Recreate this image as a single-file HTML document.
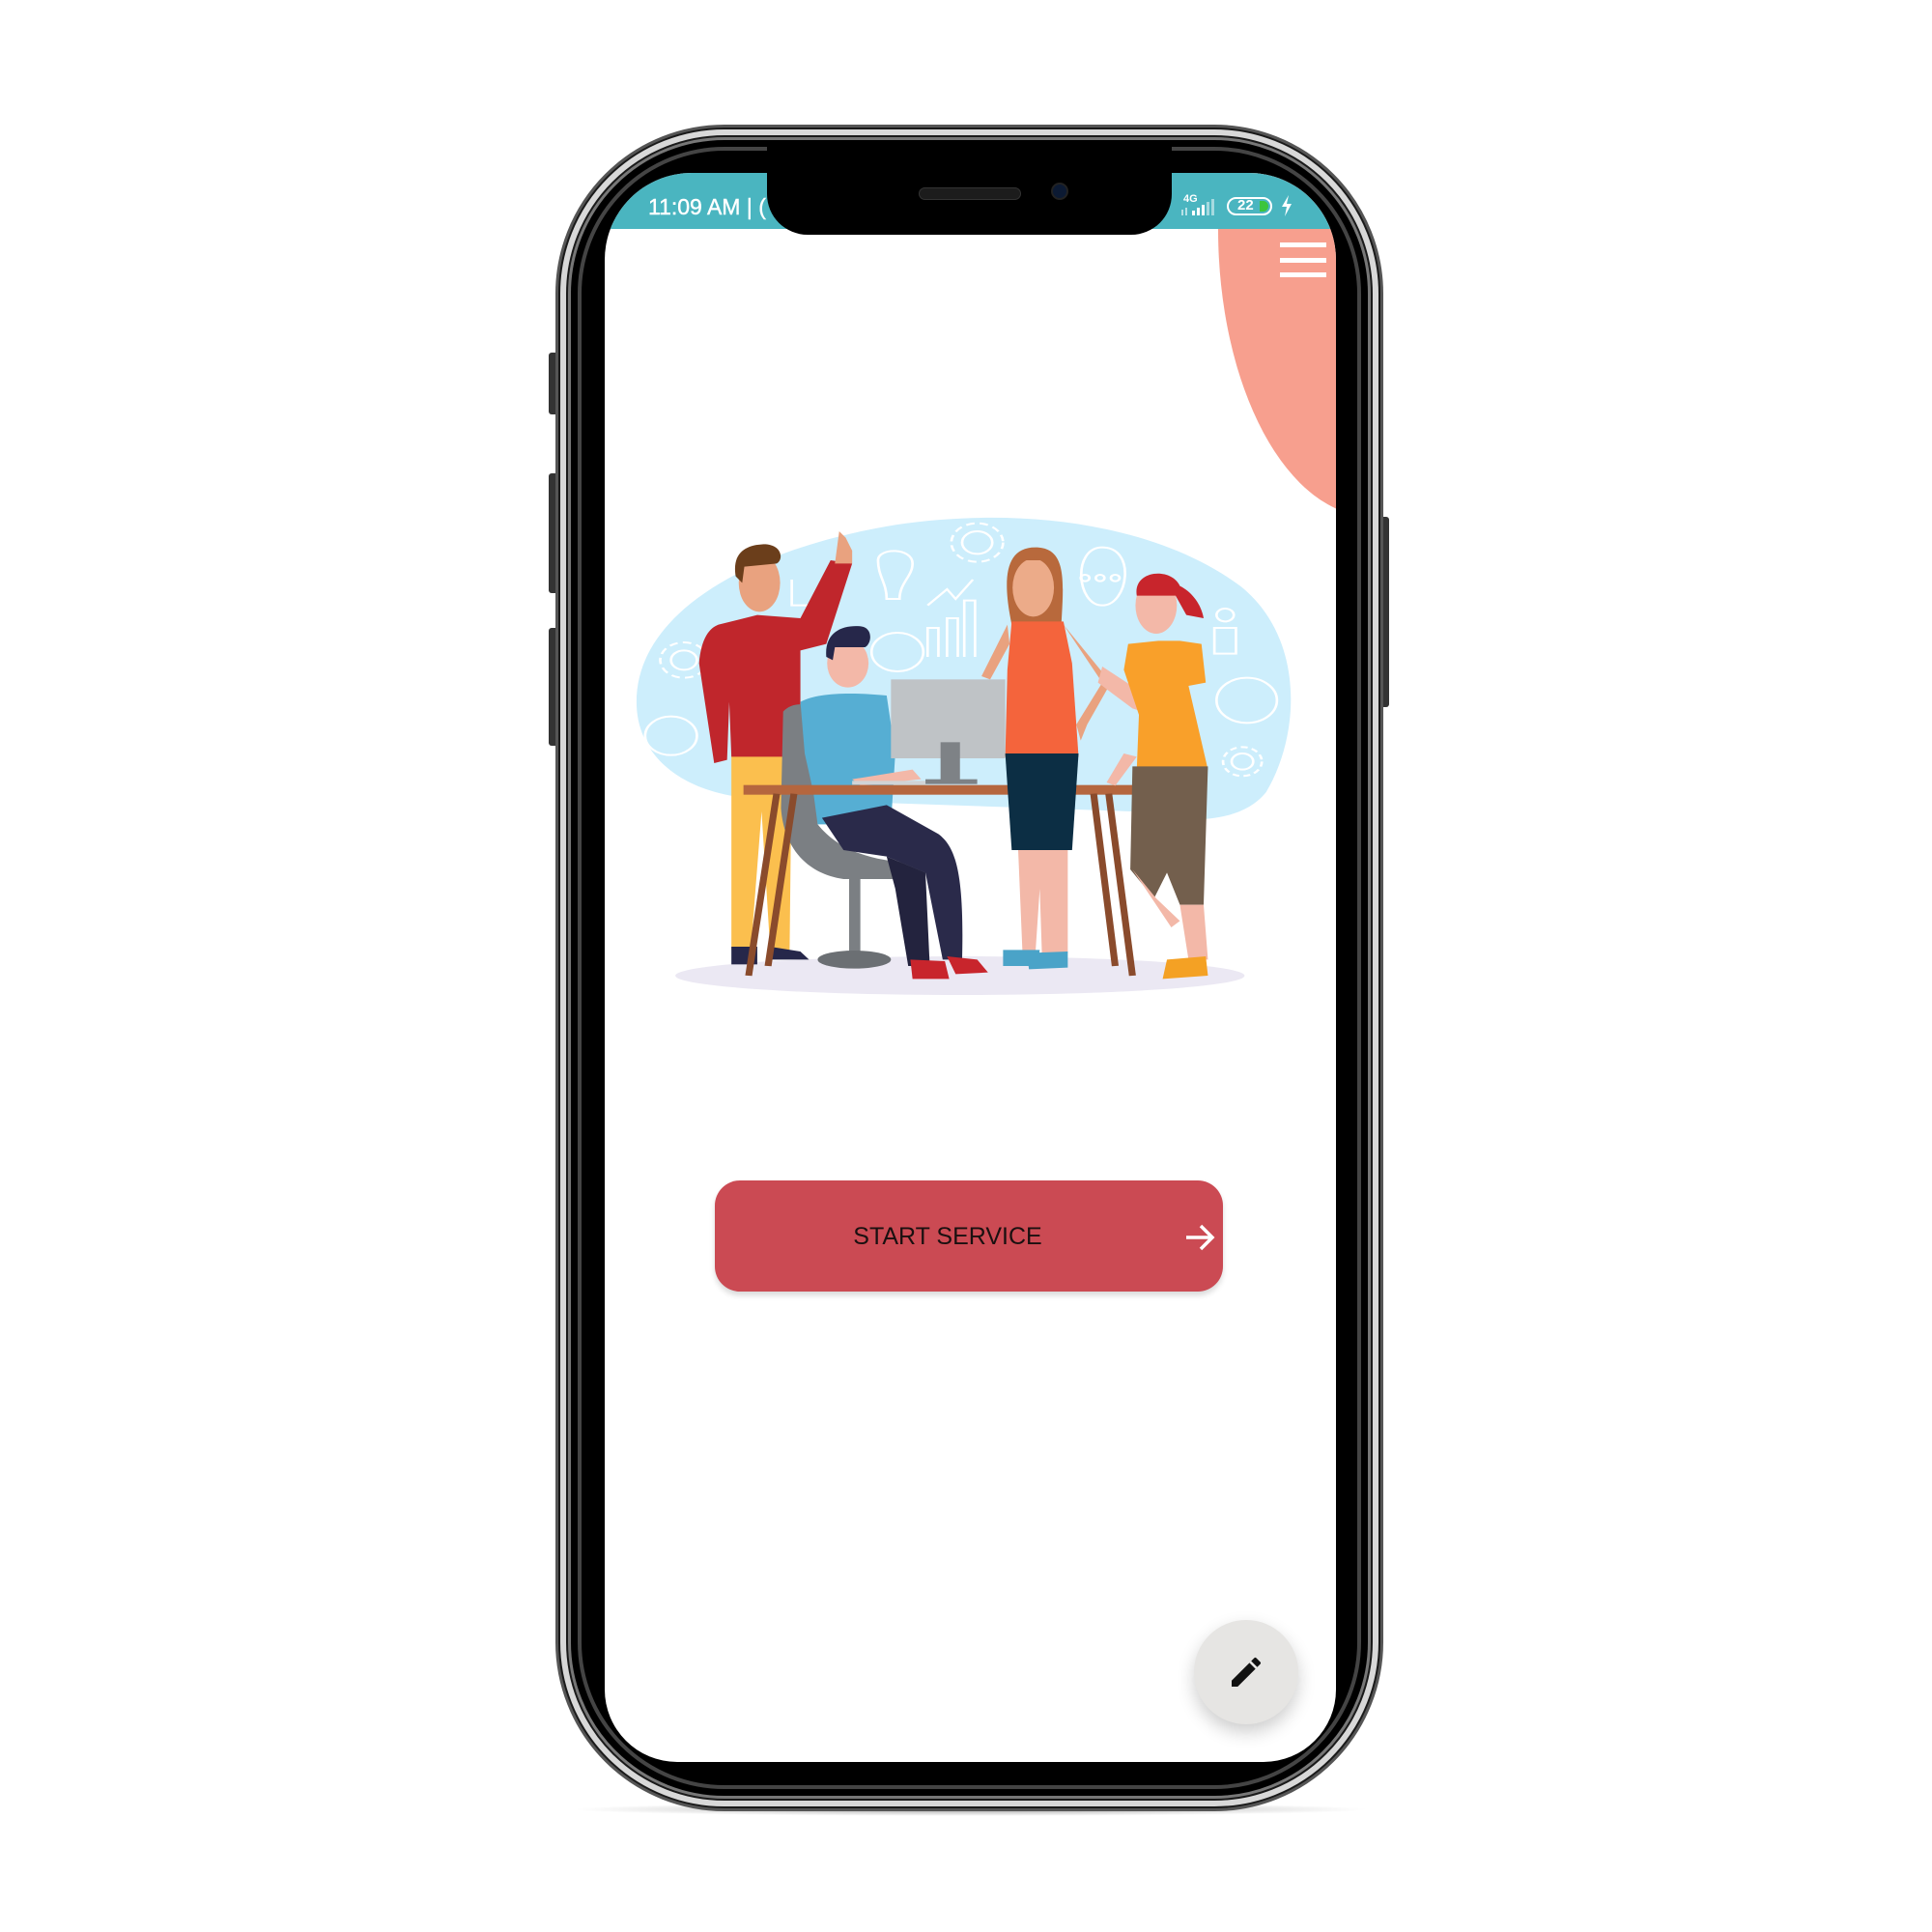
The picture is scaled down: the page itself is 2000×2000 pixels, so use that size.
<!DOCTYPE html>
<html><head><meta charset="utf-8"><style>
*{margin:0;padding:0;box-sizing:border-box}
body{width:2000px;height:2000px;background:#fff;position:relative;overflow:hidden;font-family:"Liberation Sans",sans-serif}
.abs{position:absolute}
</style></head><body>
<div class="abs" style="left:590px;top:1866px;width:830px;height:14px;border-radius:50%;background:radial-gradient(ellipse at center,rgba(0,0,0,.35),rgba(0,0,0,0) 70%)"></div>
<div class="abs" style="left:568px;top:365px;width:10px;height:64px;background:#333;border-radius:3px"></div>
<div class="abs" style="left:568px;top:490px;width:10px;height:124px;background:#333;border-radius:3px"></div>
<div class="abs" style="left:568px;top:650px;width:10px;height:122px;background:#333;border-radius:3px"></div>
<div class="abs" style="left:1428px;top:535px;width:10px;height:197px;background:#333;border-radius:3px"></div>
<div class="abs" style="left:575px;top:129px;width:857px;height:1746px;border-radius:175px;background:#1a1a1a;border:3px solid #555"></div>
<div class="abs" style="left:580px;top:134px;width:847px;height:1736px;border-radius:170px;border:6px solid #d8d8d8"></div>
<div class="abs" style="left:588px;top:142px;width:831px;height:1720px;border-radius:162px;background:#000;border:3px solid #777"></div>
<div class="abs" style="left:598px;top:152px;width:811px;height:1700px;border-radius:152px;border:4px solid #444"></div>
<div class="abs" style="left:626px;top:179px;width:757px;height:1645px;border-radius:90px 90px 75px 75px;background:#fff;overflow:hidden">
  <div class="abs" style="left:635px;top:-240px;width:320px;height:596px;border-radius:50%;background:#f79f8e"></div>
  <div class="abs" style="left:0;top:0;width:757px;height:58px;background:#4ab5c0"></div>
  <div class="abs" style="left:699px;top:72px;width:48px;height:5px;background:#fff"></div>
  <div class="abs" style="left:699px;top:88px;width:48px;height:5px;background:#fff"></div>
  <div class="abs" style="left:699px;top:103px;width:48px;height:5px;background:#fff"></div>
</div>
<div class="abs" style="left:671px;top:201px;color:#fff;font-size:23px;letter-spacing:0px;-webkit-text-stroke:0.4px #fff">11:09 AM | (</div>
<div class="abs" style="left:1225px;top:200px;color:#fff;font-size:11px;font-weight:bold">4G</div>
<svg class="abs" style="left:1220px;top:205px" width="45" height="20"><g fill="#fff"><rect x="14" y="13" width="3" height="5"/><rect x="19" y="10" width="3" height="8"/><rect x="24" y="7" width="3" height="11"/><rect x="29" y="4" width="3" height="14" opacity=".5"/><rect x="34" y="1" width="3" height="17" opacity=".5"/><rect x="3" y="12" width="2" height="6" opacity=".6"/><rect x="7" y="10" width="2" height="8" opacity=".6"/></g></svg>
<div class="abs" style="left:1270px;top:204px;width:47px;height:19px;border:2.5px solid #fff;border-radius:10px"></div>
<div class="abs" style="left:1304px;top:208px;width:9px;height:11px;background:#3cc53c;border-radius:0 6px 6px 0"></div>
<div class="abs" style="left:1281px;top:204px;color:#fff;font-size:15px;font-weight:bold">22</div>
<svg class="abs" style="left:1325px;top:202px" width="14" height="22"><path d="M9 0 L2 12 L7 12 L5 22 L12 9 L7 9 Z" fill="#fff"/></svg>
<div class="abs" style="left:794px;top:150px;width:419px;height:93px;background:#000;border-radius:0 0 42px 42px"></div>
<div class="abs" style="left:951px;top:194px;width:106px;height:13px;background:#1c1c1c;border-radius:7px;border:1px solid #333"></div>
<div class="abs" style="left:1088px;top:189px;width:18px;height:18px;background:#0c1a33;border-radius:50%;border:2px solid #222"></div>
<svg class="abs" style="left:650px;top:520px" width="700" height="520" viewBox="0 0 1568 1560" preserveAspectRatio="none">
<path d="M20 620 C20 330 300 140 620 70 C920 10 1230 70 1420 260 C1570 420 1560 720 1480 900 C1420 1000 1290 1000 1170 960 L300 920 C140 910 20 800 20 620 Z" fill="#cdeefc"/>
<g fill="none" stroke="#fff" stroke-width="6">
<circle cx="810" cy="125" r="35"/><circle cx="810" cy="125" r="60" stroke-dasharray="20 12"/>
<circle cx="130" cy="490" r="30"/><circle cx="130" cy="490" r="55" stroke-dasharray="20 12"/>
<circle cx="1425" cy="805" r="25"/><circle cx="1425" cy="805" r="45" stroke-dasharray="16 10"/>
<circle cx="100" cy="725" r="60"/><circle cx="625" cy="465" r="60"/><circle cx="1435" cy="615" r="70"/>
<path d="M380 240 L380 320 L440 320"/>
<path d="M580 180 C580 140 660 140 660 190 C660 230 630 250 630 300 L600 300 C600 250 580 230 580 180 Z"/>
<path d="M695 480 L695 390 L720 390 L720 480 M740 480 L740 360 L765 360 L765 480 M780 480 L780 305 L805 305 L805 480 M695 320 L740 270 L760 300 L800 240"/>
<path d="M1100 140 C1180 140 1160 320 1100 320 C1040 320 1030 140 1100 140 Z"/>
<circle cx="1060" cy="235" r="10"/><circle cx="1095" cy="235" r="10"/><circle cx="1130" cy="235" r="10"/>
<path d="M1360 470 L1360 390 L1410 390 L1410 470 Z"/><circle cx="1385" cy="350" r="20"/>
</g>
<ellipse cx="770" cy="1470" rx="660" ry="60" fill="#ebe8f3"/>
<path d="M240 780 L380 780 L375 1390 L330 1390 L310 960 L285 1390 L240 1390 Z" fill="#fbbf4e"/>
<rect x="240" y="1380" width="60" height="55" fill="#26274a"/><path d="M330 1380 L400 1395 L420 1420 L330 1420Z" fill="#26274a"/>
<path d="M210 380 L300 350 L400 360 L470 180 L520 190 L460 440 L400 460 L400 790 L240 790 L235 620 L230 800 L200 810 L165 500 C170 420 190 390 210 380 Z" fill="#c0262c"/>
<path d="M480 190 L490 90 L505 110 L520 150 L520 190 Z" fill="#e9a27f"/>
<ellipse cx="305" cy="250" rx="48" ry="90" fill="#e9a27f"/>
<path d="M250 230 C240 150 280 130 320 130 C360 135 360 180 345 190 L270 200 L265 250 Z" fill="#6b3e1b"/>
<path d="M360 650 C380 620 420 620 440 650 L440 1000 C500 1100 600 1120 690 1120 L690 1170 L500 1170 C400 1150 360 1050 355 950 Z" fill="#7b7f83"/>
<rect x="513" y="1170" width="26" height="230" fill="#7b7f83"/>
<ellipse cx="525" cy="1420" rx="85" ry="28" fill="#6b6f73"/>
<path d="M400 620 C440 590 520 590 600 600 L620 780 L610 1000 L440 1000 L430 900 L410 780 Z" fill="#56aed3"/>
<path d="M450 980 L600 940 L720 1030 C760 1070 780 1150 775 1420 L730 1420 L690 1150 L600 1100 L500 1080 Z" fill="#2a2a4a"/>
<path d="M600 1100 L690 1150 L700 1440 L650 1440 L620 1200 Z" fill="#23233e"/>
<path d="M655 1420 L735 1425 L745 1480 L660 1480 Z M740 1410 L810 1420 L835 1460 L760 1465 Z" fill="#c8252c"/>
<path d="M520 860 L660 830 L680 860 L540 880Z" fill="#f3b8a8"/>
<ellipse cx="510" cy="500" rx="48" ry="75" fill="#f3b8a8"/>
<path d="M460 480 C455 400 500 380 540 385 C570 390 565 440 550 450 L480 450 L475 490 Z" fill="#26274a"/>
<rect x="610" y="550" width="265" height="245" fill="#bfc3c6"/>
<rect x="725" y="745" width="45" height="120" fill="#7e8286"/>
<rect x="690" y="860" width="120" height="15" fill="#7e8286"/>
<rect x="520" y="865" width="170" height="12" fill="#d0d3d6"/>
<rect x="268" y="878" width="945" height="30" fill="#b5663e"/>
<g stroke="#8a4b2c" stroke-width="16"><line x1="345" y1="905" x2="280" y2="1470"/><line x1="385" y1="905" x2="325" y2="1440"/><line x1="1080" y1="905" x2="1130" y2="1440"/><line x1="1115" y1="905" x2="1170" y2="1470"/></g>
<path d="M890 380 C870 250 870 140 945 140 C1020 140 1010 250 1005 380 Z" fill="#b8693c"/>
<ellipse cx="940" cy="265" rx="48" ry="90" fill="#ecab89"/>
<path d="M892 230 C890 160 990 150 995 230 L980 180 L905 180 Z" fill="#b8693c"/>
<path d="M880 380 L820 540 L840 550 L885 440 Z M1010 380 L1100 560 L1040 690 L1050 740 L1065 690 L1120 560 Z" fill="#e9a27f"/>
<path d="M890 370 L1010 370 L1030 500 L1045 790 L875 790 L880 520 Z" fill="#f4643c"/>
<path d="M875 780 L1045 780 L1030 1080 L890 1080 Z" fill="#0c2e44"/>
<path d="M905 1080 L1020 1080 L1020 1400 L960 1400 L955 1200 L945 1400 L915 1400 Z" fill="#f3b8a8"/>
<path d="M870 1390 L955 1390 L950 1440 L870 1440 Z M925 1400 L1020 1395 L1020 1445 L930 1450 Z" fill="#4aa3c8"/>
<ellipse cx="1225" cy="320" rx="48" ry="88" fill="#f3b8a8"/>
<path d="M1180 290 C1170 210 1260 200 1280 260 C1310 280 1330 320 1335 360 L1295 350 L1270 290 L1195 290 Z" fill="#c8252c"/>
<path d="M1100 510 L1180 580 L1250 600 L1240 670 L1170 640 L1090 560 Z" fill="#f3b8a8"/>
<path d="M1150 780 L1110 870 L1130 880 L1180 790 Z" fill="#f3b8a8"/>
<path d="M1160 440 L1230 430 L1280 430 L1330 440 L1340 560 L1300 570 L1345 830 L1180 830 L1185 660 L1150 520 Z" fill="#f9a02a"/>
<path d="M1170 820 L1345 820 L1335 1250 L1280 1250 L1250 1150 L1220 1230 L1165 1140 Z" fill="#735f4d"/>
<path d="M1280 1250 L1335 1250 L1345 1420 L1300 1420 Z M1170 1140 L1225 1230 L1280 1300 L1260 1320 Z" fill="#f3b8a8"/>
<path d="M1250 1420 L1340 1410 L1345 1470 L1240 1480 Z" fill="#f4a124"/>
</svg>
<div class="abs" style="left:740px;top:1222px;width:526px;height:115px;border-radius:26px;background:#cb4a53;box-shadow:0 4px 6px rgba(0,0,0,.15)"></div>
<div class="abs" style="left:740px;top:1266px;width:482px;text-align:center;font-size:25px;color:#1a1010">START SERVICE</div>
<svg class="abs" style="left:1225px;top:1264px" width="34" height="34" viewBox="0 0 34 34"><path d="M3 17 H30 M18 5 L30 17 L18 29" fill="none" stroke="#fff" stroke-width="3.5"/></svg>
<div class="abs" style="left:1236px;top:1677px;width:108px;height:108px;border-radius:50%;background:#e6e5e3;box-shadow:0 8px 18px rgba(0,0,0,.2)"></div>
<svg class="abs" style="left:1270px;top:1711px" width="40" height="40" viewBox="0 0 24 24"><path d="M3 17.25V21h3.75L17.81 9.94l-3.75-3.75L3 17.25zM20.71 7.04a1 1 0 0 0 0-1.41l-2.34-2.34a1 1 0 0 0-1.41 0l-1.830 1.83 3.75 3.75 1.83-1.83z" fill="#111"/></svg>
</body></html>
